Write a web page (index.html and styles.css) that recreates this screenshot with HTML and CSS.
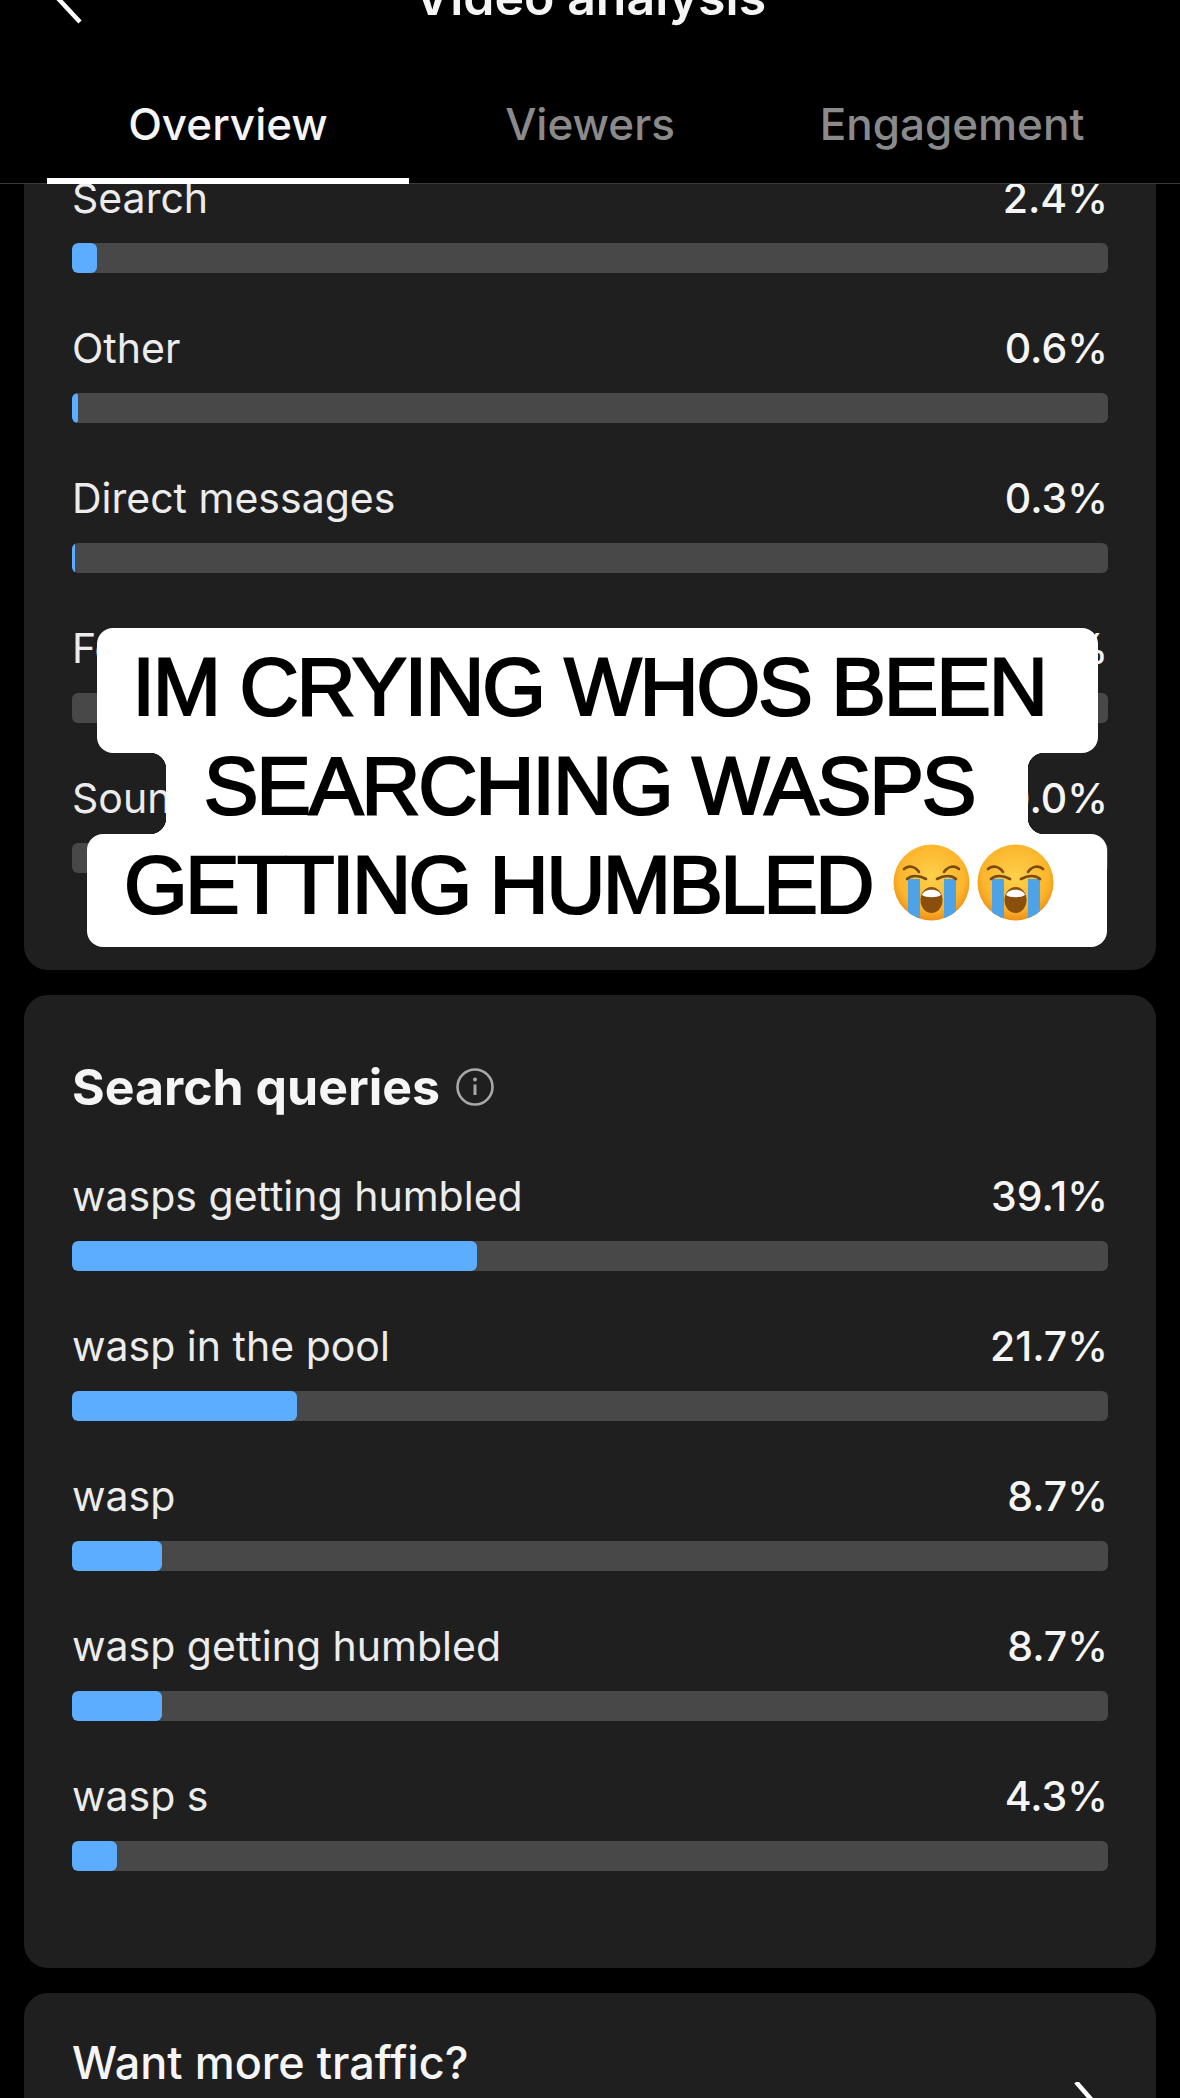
FILE: index.html
```html
<!DOCTYPE html>
<html lang="en">
<head>
  <meta charset="UTF-8" />
  <title>Video analysis</title>
  <link rel="stylesheet" href="styles.css">
</head>
<body>
  <div class="page">
    <header class="top">
      <div class="title-row">
        <svg class="back" width="40" height="50" viewBox="0 0 40 50" aria-hidden="true"><path d="M33 -21 L6 8 L33 37" fill="none" stroke="#fff" stroke-width="4.5"/></svg>
        <h1 class="title">Video analysis</h1>
      </div>
      <nav class="tabs">
        <a class="tab active">Overview</a>
        <a class="tab">Viewers</a>
        <a class="tab">Engagement</a>
      </nav>
    </header>

    <main class="scroll">
      <section class="card first">
        <div class="row">
          <div class="row-head"><span>Search</span><b>2.4%</b></div>
          <div class="track"><div class="fill" style="width:2.4%"></div></div>
        </div>
        <div class="row">
          <div class="row-head"><span>Other</span><b>0.6%</b></div>
          <div class="track"><div class="fill" style="width:0.6%"></div></div>
        </div>
        <div class="row">
          <div class="row-head"><span>Direct messages</span><b>0.3%</b></div>
          <div class="track"><div class="fill" style="width:0.3%"></div></div>
        </div>
        <div class="row">
          <div class="row-head"><span>Following</span><b>0.0%</b></div>
          <div class="track"></div>
        </div>
        <div class="row">
          <div class="row-head"><span>Sound</span><b>0.0%</b></div>
          <div class="track"></div>
        </div>
      </section>

      <section class="card">
        <h2 class="card-title">Search queries
          <svg class="info" width="38" height="38" viewBox="0 0 38 38" aria-hidden="true">
            <circle cx="19" cy="19" r="17.5" fill="none" stroke="#a8a8a8" stroke-width="2.6"/>
            <circle cx="19" cy="11.5" r="2" fill="#a8a8a8"/>
            <path d="M19 16.5 V27" stroke="#a8a8a8" stroke-width="3"/>
          </svg>
        </h2>
        <div class="row">
          <div class="row-head"><span>wasps getting humbled</span><b>39.1%</b></div>
          <div class="track"><div class="fill" style="width:39.1%"></div></div>
        </div>
        <div class="row">
          <div class="row-head"><span>wasp in the pool</span><b>21.7%</b></div>
          <div class="track"><div class="fill" style="width:21.7%"></div></div>
        </div>
        <div class="row">
          <div class="row-head"><span>wasp</span><b>8.7%</b></div>
          <div class="track"><div class="fill" style="width:8.7%"></div></div>
        </div>
        <div class="row">
          <div class="row-head"><span>wasp getting humbled</span><b>8.7%</b></div>
          <div class="track"><div class="fill" style="width:8.7%"></div></div>
        </div>
        <div class="row">
          <div class="row-head"><span>wasp s</span><b>4.3%</b></div>
          <div class="track"><div class="fill" style="width:4.3%"></div></div>
        </div>
      </section>

      <section class="card promo">
        <div class="promo-text">Want more traffic?</div>
        <svg class="next" width="30" height="40" viewBox="0 0 30 40" aria-hidden="true"><path d="M3 0 L24 24" fill="none" stroke="#fff" stroke-width="4.5"/></svg>
      </section>
    </main>

    <!-- caption sticker on top of the screenshot -->
    <div class="sticker">
      <div class="line line-1">IM CRYING WHOS BEEN</div>
      <div class="line line-2">SEARCHING WASPS</div>
      <div class="line line-3">GETTING HUMBLED
        <svg class="emoji" width="77" height="77" viewBox="0 0 77 77" aria-hidden="true">
          <defs>
            <radialGradient id="face" cx="50%" cy="42%" r="58%">
              <stop offset="0" stop-color="#fdd04a"/>
              <stop offset="0.75" stop-color="#fbb52c"/>
              <stop offset="1" stop-color="#ee8f16"/>
            </radialGradient>
            <clipPath id="round"><circle cx="38.5" cy="38.5" r="38"/></clipPath>
          </defs>
          <circle cx="38.5" cy="38.5" r="38" fill="url(#face)"/>
          <g clip-path="url(#round)">
            <rect x="15" y="35" width="12" height="42" fill="#4da3e6"/>
            <rect x="51" y="35" width="12" height="42" fill="#4da3e6"/>
          </g>
          <path d="M11 25 C15 21 22 22 26 28 M66 25 C62 21 55 22 51 28 M14 35 C18 31 26 31 33 35 M63 35 C59 31 51 31 44 35" fill="none" stroke="#7a4a10" stroke-width="2.6" stroke-linecap="round"/>
          <ellipse cx="38.5" cy="56" rx="11" ry="13" fill="#8a4f0d"/>
          <path d="M29 51 C31 44 46 44 48 51 C44 54 33 54 29 51Z" fill="#fff"/>
        </svg><svg class="emoji second" width="77" height="77" viewBox="0 0 77 77" aria-hidden="true">
          <circle cx="38.5" cy="38.5" r="38" fill="url(#face)"/>
          <g clip-path="url(#round)">
            <rect x="15" y="35" width="12" height="42" fill="#4da3e6"/>
            <rect x="51" y="35" width="12" height="42" fill="#4da3e6"/>
          </g>
          <path d="M11 25 C15 21 22 22 26 28 M66 25 C62 21 55 22 51 28 M14 35 C18 31 26 31 33 35 M63 35 C59 31 51 31 44 35" fill="none" stroke="#7a4a10" stroke-width="2.6" stroke-linecap="round"/>
          <ellipse cx="38.5" cy="56" rx="11" ry="13" fill="#8a4f0d"/>
          <path d="M29 51 C31 44 46 44 48 51 C44 54 33 54 29 51Z" fill="#fff"/>
        </svg>
      </div>
    </div>
  </div>
</body>
</html>
```

FILE: styles.css
```css
* {
  box-sizing: border-box;
}
html, body {
  margin: 0;
  background: #000;
}
body {
  font-family: 'Inter', 'Roboto', sans-serif;
  color: #ececec;
}
.page {
  position: relative;
  height: 2098px;
  overflow: hidden;
  display: flex;
  flex-direction: column;
}

/* header */
.top {
  flex: none;
  height: 184px;
  border-bottom: 1px solid #3a3a3a;
  display: flex;
  flex-direction: column;
  justify-content: space-between;
  background: #000;
}
.title-row {
  position: relative;
  height: 50px;
  margin-top: -28px;
  text-align: center;
}
.back {
  position: absolute;
  left: 47px;
  top: 13px;
  overflow: visible;
}
.title {
  margin: 0;
  font-size: 50px;
  line-height: 50px;
  font-weight: 600;
  color: #f5f5f5;
}
.tabs {
  display: flex;
  padding: 0 47px;
  margin-bottom: -1px;
}
.tab {
  flex: 1;
  height: 85px;
  text-align: center;
  font-size: 44px;
  line-height: 50px;
  font-weight: 500;
  color: #8a8a8a;
}
.tab.active {
  color: #f5f5f5;
  border-bottom: 6px solid #fff;
}

/* cards */
.scroll {
  flex: 1;
  overflow: hidden;
  padding: 0 24px;
}
.card {
  background: #1f1f1f;
  border-radius: 24px;
  padding: 0 48px 97px;
  margin-bottom: 25px;
  display: flex;
  flex-direction: column;
  gap: 50px;
}
.card.first {
  margin-top: -11px;
  border-radius: 0 0 24px 24px;
}
.card-title {
  margin: 0 0 4px;
  padding-top: 62px;
  display: flex;
  align-items: center;
  gap: 16px;
  font-size: 50px;
  line-height: 60px;
  font-weight: 700;
  color: #f5f5f5;
}
.row-head {
  display: flex;
  justify-content: space-between;
  height: 50px;
  margin-bottom: 20px;
  font-size: 41px;
  line-height: 51px;
}
.row-head b {
  font-weight: 500;
  color: #f5f5f5;
}
.track {
  height: 30px;
  background: #484848;
  border-radius: 6px;
  overflow: hidden;
}
.fill {
  height: 100%;
  background: #5cadff;
  border-radius: 6px;
}
.promo {
  flex-direction: row;
  justify-content: space-between;
  padding-top: 40px;
  height: 200px;
}
.promo-text {
  font-size: 45px;
  line-height: 60px;
  font-weight: 500;
  color: #f5f5f5;
}
.next {
  margin-top: 49px;
  margin-right: 5px;
}

/* caption sticker */
.sticker {
  position: absolute;
  top: 628px;
  left: 14px;
  right: 0;
  display: flex;
  flex-direction: column;
  align-items: center;
  font-family: 'Liberation Sans', Arial, sans-serif;
  font-size: 82px;
  line-height: 60px;
  letter-spacing: -2.2px;
  color: #000;
  -webkit-text-stroke: 2.2px #000;
  white-space: nowrap;
}
.line {
  position: relative;
  background: #fff;
}
.line-1 {
  width: 1001px;
  height: 125px;
  padding: 29px 16px 0 0;
  text-align: center;
  border-radius: 16px;
}
.line-2 {
  width: 862px;
  height: 81px;
  padding: 3px 16px 0 0;
  text-align: center;
}
.line-2::before,
.line-2::after {
  content: "";
  position: absolute;
  top: 0;
  bottom: 0;
  width: 16px;
}
.line-2::before {
  right: 100%;
  background:
    radial-gradient(circle at 0 100%, transparent 16px, #fff 16.5px) top / 16px 16px no-repeat,
    radial-gradient(circle at 0 0, transparent 16px, #fff 16.5px) bottom / 16px 16px no-repeat;
}
.line-2::after {
  left: 100%;
  background:
    radial-gradient(circle at 100% 100%, transparent 16px, #fff 16.5px) top / 16px 16px no-repeat,
    radial-gradient(circle at 100% 0, transparent 16px, #fff 16.5px) bottom / 16px 16px no-repeat;
}
.line-3 {
  width: 1020px;
  height: 113px;
  padding: 21px 0 0 37px;
  letter-spacing: -2.7px;
  border-radius: 16px;
}
.emoji {
  vertical-align: -8px;
  margin-top: -20px;
  margin-left: 1px;
}
.emoji.second {
  margin-left: 7px;
}
```
